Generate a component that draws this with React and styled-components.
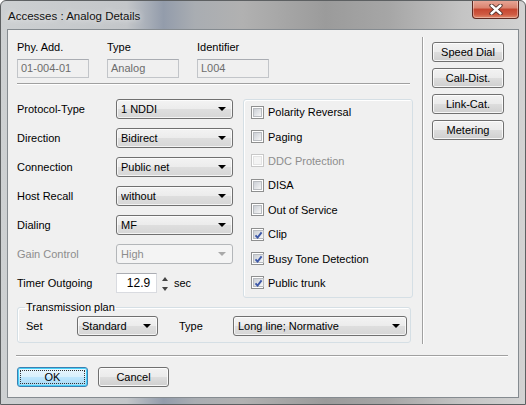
import React from 'react'
import styled, { createGlobalStyle, css } from 'styled-components'

const GlobalStyle = createGlobalStyle`
  html, body { margin: 0; padding: 0; background: #fff; }
  body {
    font-family: "Liberation Sans", Arial, sans-serif;
    font-size: 11px;
    color: #000;
  }
  * { box-sizing: border-box; }
`

const Window = styled.div`
  width: 526px;
  height: 405px;
  display: flex;
  flex-direction: column;
  border: 1px solid #5d6062;
  border-radius: 6px 6px 0 0;
  overflow: hidden;
  background:
    linear-gradient(to right, #cdd0d2 0%, #c3c6c9 24%, #939cab 31%, #a9adb2 37%, #b1b1b1 46%, #9b9b9b 62%, #a6a6a6 74%, #c4c4c4 88%, #d2d2d2 100%);
`

const TitleBar = styled.div`
  height: 28px;
  display: flex;
  align-items: flex-start;
  padding-left: 7px;
`

const Title = styled.span`
  margin-top: 7px;
  font-size: 11.5px;
  line-height: 16px;
  color: #111;
  text-shadow: 0 0 6px rgba(255, 255, 255, 0.9);
`

const CloseButton = styled.div`
  margin-left: auto;
  margin-right: 6px;
  width: 47px;
  height: 19px;
  margin-top: -1px;
  display: flex;
  align-items: center;
  justify-content: center;
  border: 1px solid #5e2a22;
  border-top: none;
  border-radius: 0 0 4px 4px;
  background: linear-gradient(to bottom, #e9a99a 0%, #d9826e 45%, #c5452f 50%, #cf5a42 80%, #e08a6c 100%);
  box-shadow: inset 0 0 0 1px rgba(255, 255, 255, 0.35);
`

const Client = styled.div`
  flex: 1;
  margin: 0 6px 6px 6px;
  border: 1px solid #858b90;
  background: #f0f0f0;
  display: flex;
  flex-direction: column;
`

const Body = styled.div`
  display: flex;
  height: 325px;
`

const Main = styled.div`
  width: 414px;
  padding-left: 9px;
`

const Header = styled.div`
  padding-top: 11px;
  display: grid;
  grid-template-columns: 90px 90px 90px;
`

const Field = styled.div`
  display: flex;
  flex-direction: column;
`

const Label = styled.span`
  line-height: 13px;
  width: ${p => p.$w || 'auto'};
  margin-left: ${p => p.$ml || 0};
  color: ${p => (p.$disabled ? '#8d8d8d' : '#000')};
  flex: none;
`

const ReadOnly = styled.div`
  margin-top: 5px;
  width: 72px;
  height: 19px;
  border: 1px solid #c2c5c9;
  border-top-color: #a9acb2;
  background: #f0f0f0;
  color: #6d6d6d;
  padding: 0 3px;
  line-height: 17px;
`

const Etched = styled.div`
  height: 2px;
  border-top: 1px solid #a0a0a0;
  border-bottom: 1px solid #fff;
  ${p => p.$w && css`width: ${p.$w}px;`}
  margin: ${p => p.$m || 0};
`

const FormArea = styled.div`
  margin-top: 14px;
  display: flex;
`

const LeftFields = styled.div`
  width: 226px;
  display: flex;
  flex-direction: column;
  gap: 9px;
`

const Row = styled.div`
  display: flex;
  align-items: center;
  height: 20px;
`

const ComboBox = styled.div`
  width: ${p => p.$w}px;
  height: 20px;
  flex: none;
  display: flex;
  align-items: center;
  padding: 0 6px 0 4px;
  border: 1px solid ${p => (p.$disabled ? '#b3b6b9' : '#707070')};
  border-radius: 3px;
  color: ${p => (p.$disabled ? '#8d8d8d' : '#000')};
  background: ${p =>
    p.$disabled
      ? '#f4f4f4'
      : 'linear-gradient(to bottom, #f3f3f3 0%, #ececec 48%, #dedede 52%, #d6d6d6 100%)'};
  box-shadow: inset 0 0 0 1px ${p => (p.$disabled ? 'transparent' : 'rgba(255,255,255,0.7)')};
`

const ComboText = styled.span`
  flex: 1;
  white-space: nowrap;
  overflow: hidden;
`

const Arrow = styled.span`
  width: 0;
  height: 0;
  border-left: 4px solid transparent;
  border-right: 4px solid transparent;
  border-top: 4px solid ${p => (p.$disabled ? '#a9a9a9' : '#000')};
`

const NumberBox = styled.div`
  width: 41px;
  height: 20px;
  border: 1px solid #d9dbe0;
  border-top-color: #abadb3;
  background: #fff;
  text-align: center;
  line-height: 18px;
  font-size: 12px;
  padding-left: 4px;
`

const Spinner = styled.div`
  width: 9px;
  height: 20px;
  margin-left: 3px;
  display: flex;
  flex-direction: column;
  align-items: center;
  justify-content: space-between;
  padding: 4px 0 2px;
`

const SpinArrow = styled.span`
  width: 0;
  height: 0;
  border-left: 3px solid transparent;
  border-right: 3px solid transparent;
  ${p =>
    p.$up
      ? css`border-bottom: 4px solid #444;`
      : css`border-top: 4px solid #444;`}
`

const Unit = styled.span`
  margin-left: 5px;
`

const CheckGroup = styled.div`
  width: 170px;
  height: 199px;
  border: 1px solid #d5dfe5;
  border-radius: 3px;
  box-shadow: inset 1px 1px 0 #fff;
  display: grid;
  grid-auto-rows: 24.4px;
  padding-left: 7px;
`

const CheckRow = styled.div`
  display: flex;
  align-items: center;
  gap: 4px;
  color: ${p => (p.$disabled ? '#8d8d8d' : '#000')};
`

const Box = styled.span`
  width: 13px;
  height: 13px;
  flex: none;
  border: 1px solid ${p => (p.$disabled ? '#c8c8c8' : '#8e8f8f')};
  background: #fff;
  padding: 1px;
  display: flex;
`

const BoxInner = styled.span`
  flex: 1;
  background: ${p =>
    p.$disabled
      ? '#f4f4f4'
      : 'linear-gradient(135deg, #cbcfd5 0%, #e4e6e9 60%, #f6f6f6 100%)'};
  border: 1px solid ${p => (p.$disabled ? '#e3e3e3' : '#b8bbbf')};
  display: flex;
`

const Transmission = styled.fieldset`
  margin: 3px 0 0 0;
  width: 394px;
  padding: 0 0 6px 8px;
  border: 1px solid #d5dfe5;
  border-radius: 3px;
  box-shadow: inset 1px 1px 0 #fff;
`

const Legend = styled.legend`
  padding: 0 1px;
  margin-left: -1px;
  line-height: 13px;
`

const PlanRow = styled(Row)`
  margin-top: 2px;
`

const VSep = styled.div`
  width: 2px;
  height: 307px;
  margin-top: 7px;
  border-left: 1px solid #a0a0a0;
  border-right: 1px solid #fff;
`

const Side = styled.div`
  padding: 12px 0 0 8px;
  display: flex;
  flex-direction: column;
  gap: 6px;
`

const Button = styled.div`
  width: ${p => p.$w}px;
  height: 20px;
  display: flex;
  align-items: center;
  justify-content: center;
  border: 1px solid ${p => (p.$default ? '#3c7fb1' : '#707070')};
  border-radius: 3px;
  background: ${p =>
    p.$default
      ? 'linear-gradient(to bottom, #eaf6fd 0%, #d9f0fc 48%, #bee6fd 52%, #a7d9f5 100%)'
      : 'linear-gradient(to bottom, #f2f2f2 0%, #ebebeb 48%, #dddddd 52%, #cfcfcf 100%)'};
  box-shadow: inset 0 0 0 1px ${p => (p.$default ? '#48d1f8' : 'rgba(255,255,255,0.8)')};
  padding: 2px;
`

const FocusRing = styled.span`
  flex: 1;
  align-self: stretch;
  display: flex;
  align-items: center;
  justify-content: center;
  border: 1px dotted ${p => (p.$on ? '#333' : 'transparent')};
`

const Footer = styled.div`
  display: flex;
  gap: 10px;
  padding: 10px 0 0 9px;
`

function Combo({ w, text, disabled }) {
  return (
    <ComboBox $w={w} $disabled={disabled}>
      <ComboText>{text}</ComboText>
      <Arrow $disabled={disabled} />
    </ComboBox>
  )
}

function Check({ label, checked, disabled }) {
  return (
    <CheckRow $disabled={disabled}>
      <Box $disabled={disabled}>
        <BoxInner $disabled={disabled}>
          {checked && (
            <svg width="9" height="9" viewBox="0 0 9 9">
              <path d="M1.5 4.3 L3.6 6.6 L7.6 1.4" fill="none" stroke="#3d58a8" strokeWidth="1.9" />
            </svg>
          )}
        </BoxInner>
      </Box>
      {label}
    </CheckRow>
  )
}

const fields = [
  { label: 'Protocol-Type', value: '1 NDDI' },
  { label: 'Direction', value: 'Bidirect' },
  { label: 'Connection', value: 'Public net' },
  { label: 'Host Recall', value: 'without' },
  { label: 'Dialing', value: 'MF' },
  { label: 'Gain Control', value: 'High', disabled: true },
]

const checks = [
  { label: 'Polarity Reversal' },
  { label: 'Paging' },
  { label: 'DDC Protection', disabled: true },
  { label: 'DISA' },
  { label: 'Out of Service' },
  { label: 'Clip', checked: true },
  { label: 'Busy Tone Detection', checked: true },
  { label: 'Public trunk', checked: true },
]

const sideButtons = ['Speed Dial', 'Call-Dist.', 'Link-Cat.', 'Metering']

export default function App() {
  return (
    <>
      <GlobalStyle />
      <Window>
        <TitleBar>
          <Title>Accesses : Analog Details</Title>
          <CloseButton>
            <svg width="14" height="11" viewBox="0 0 14 11">
              <path d="M2.5 1.5 L11.5 9.5 M11.5 1.5 L2.5 9.5" stroke="#4a2b25" strokeWidth="4.2" strokeLinecap="round" />
              <path d="M2.5 1.5 L11.5 9.5 M11.5 1.5 L2.5 9.5" stroke="#fff" strokeWidth="2.4" strokeLinecap="round" />
            </svg>
          </CloseButton>
        </TitleBar>
        <Client>
          <Body>
            <Main>
              <Header>
                <Field>
                  <Label>Phy. Add.</Label>
                  <ReadOnly>01-004-01</ReadOnly>
                </Field>
                <Field>
                  <Label>Type</Label>
                  <ReadOnly>Analog</ReadOnly>
                </Field>
                <Field>
                  <Label>Identifier</Label>
                  <ReadOnly>L004</ReadOnly>
                </Field>
              </Header>
              <Etched $w={393} $m="5px 0 0 0" />
              <FormArea>
                <LeftFields>
                  {fields.map(f => (
                    <Row key={f.label}>
                      <Label $w="99px" $disabled={f.disabled}>{f.label}</Label>
                      <Combo w={117} text={f.value} disabled={f.disabled} />
                    </Row>
                  ))}
                  <Row>
                    <Label $w="99px">Timer Outgoing</Label>
                    <NumberBox>12.9</NumberBox>
                    <Spinner>
                      <SpinArrow $up />
                      <SpinArrow />
                    </Spinner>
                    <Unit>sec</Unit>
                  </Row>
                </LeftFields>
                <CheckGroup>
                  {checks.map(c => (
                    <Check key={c.label} {...c} />
                  ))}
                </CheckGroup>
              </FormArea>
              <Transmission>
                <Legend>Transmission plan</Legend>
                <PlanRow>
                  <Label $w="51px">Set</Label>
                  <Combo w={81} text="Standard" />
                  <Label $w="54px" $ml="21px">Type</Label>
                  <Combo w={174} text="Long line; Normative" />
                </PlanRow>
              </Transmission>
            </Main>
            <VSep />
            <Side>
              {sideButtons.map(b => (
                <Button key={b} $w={72}>{b}</Button>
              ))}
            </Side>
          </Body>
          <Etched $m="0 10px 0 8px" />
          <Footer>
            <Button $w={71} $default>
              <FocusRing $on>OK</FocusRing>
            </Button>
            <Button $w={71}>Cancel</Button>
          </Footer>
        </Client>
      </Window>
    </>
  )
}
